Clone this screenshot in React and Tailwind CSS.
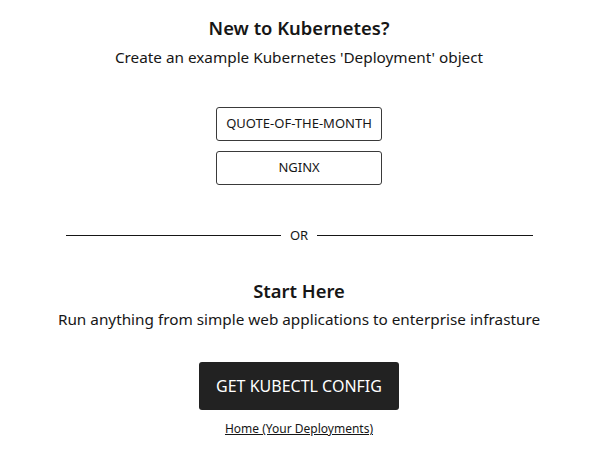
import React from "react";

const font = { fontFamily: '"Noto Sans", "Open Sans", sans-serif' };

const ExampleButton = ({ label }) => (
    <button className="w-[166px] h-[34px] rounded-[3px] border border-[#3a3a3a] bg-white text-[13px] text-[#161616]">
        {label}
    </button>
);

const App = () => {
    return (
        <div className="w-[606px] h-[459px] pr-[8px] bg-white text-[#161616] flex flex-col items-center" style={font}>
            {/* Examples */}
            <h2 className="mt-[16px] text-[18.4px] leading-[24px] font-semibold">New to Kubernetes?</h2>
            <p className="mt-[6px] text-[15.3px] leading-[22px]">Create an example Kubernetes 'Deployment' object</p>
            <div className="mt-[39px] flex flex-col gap-[10px]">
                <ExampleButton label="QUOTE-OF-THE-MONTH" />
                <ExampleButton label="NGINX" />
            </div>

            {/* Divider */}
            <div className="mt-[41px] w-[467px] flex items-center gap-[8px]">
                <div className="flex-1 h-px bg-[#161616]" />
                <span className="text-[13px] leading-[18px] px-[1px]">OR</span>
                <div className="flex-1 h-px bg-[#161616]" />
            </div>

            {/* Start here */}
            <h2 className="mt-[35px] text-[18.4px] leading-[24px] font-semibold">Start Here</h2>
            <p className="mt-[5px] text-[15.3px] leading-[22px]">Run anything from simple web applications to enterprise infrasture</p>
            <button className="mt-[32px] w-[200px] h-[48px] rounded-[3px] bg-[#222222] text-white text-[16px]">
                GET KUBECTL CONFIG
            </button>
            <a href="#" className="mt-[10px] text-[12px] leading-[18px] underline">Home (Your Deployments)</a>
        </div>
    );
};

export default App;
